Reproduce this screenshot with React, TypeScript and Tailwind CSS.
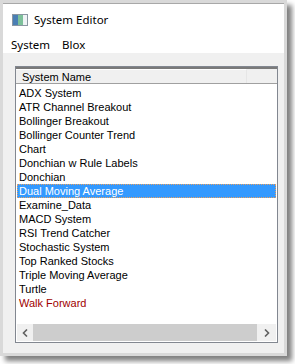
import React from "react";

const items = [
  "ADX System",
  "ATR Channel Breakout",
  "Bollinger Breakout",
  "Bollinger Counter Trend",
  "Chart",
  "Donchian w Rule Labels",
  "Donchian",
  "Dual Moving Average",
  "Examine_Data",
  "MACD System",
  "RSI Trend Catcher",
  "Stochastic System",
  "Top Ranked Stocks",
  "Triple Moving Average",
  "Turtle",
  "Walk Forward",
];

export default function App() {
  return (
    <div className="w-[295px] h-[364px] bg-white overflow-hidden">
      <div
        className="w-[287px] h-[356px] border-[3px] border-[#d9d9d9] shadow-[5px_5px_5px_rgba(0,0,0,0.5)] flex flex-col bg-white"
      >
        <div className="h-[1px] bg-[#a8a8a8]" />
        {/* title bar */}
        <div className="h-[32px] flex items-center pl-[9px] shrink-0">
          <svg width="16" height="12" viewBox="0 0 16 12" className="mr-[6px]">
            <rect x="0" y="0" width="16" height="12" fill="#8a96a2" />
            <rect x="1" y="1" width="5" height="10" fill="#4a7fb4" />
            <rect x="6" y="1" width="5" height="10" fill="#7cc09a" />
            <rect x="11" y="1" width="4" height="10" fill="#eef3f5" />
          </svg>
          <span className="text-[11.5px] text-black" style={{ fontFamily: "'Noto Sans', 'Liberation Sans', sans-serif" }}>
            System Editor
          </span>
        </div>
        {/* menu bar */}
        <div className="h-[17px] flex items-center shrink-0 text-[11.5px] text-black" style={{ fontFamily: "'Noto Sans', 'Liberation Sans', sans-serif" }}>
          <span className="ml-[8px]">System</span>
          <span className="ml-[12px]">Blox</span>
        </div>
        {/* client */}
        <div className="flex-1 bg-[#f0f0f0] pl-[12px] pr-[6px] pt-[13px] pb-[10px] flex">
          <div className="flex-1 border border-[#828790] bg-white flex flex-col leading-[14px] text-black" style={{ fontFamily: "'Liberation Sans', Arial, sans-serif", fontSize: "11px" }}>
            {/* header */}
            <div className="h-[17px] shrink-0 border-t-2 border-t-[#7a7a7a] border-b border-b-[#a0a0a0] bg-[#f0f0f0] flex">
              <div className="w-[231px] border-t border-t-white border-r border-r-[#e6e6e6] pl-[6px] flex items-center">
                System Name
              </div>
            </div>
            {/* rows */}
            <div className="flex-1 pt-[2px] pl-[1px] pr-[1px]">
              {items.map((it, i) => {
                const sel = i === 7;
                const last = it === "Walk Forward";
                return (
                  <div
                    key={it}
                    className={
                      "h-[14px] pl-[2px] whitespace-nowrap " +
                      (sel
                        ? "bg-[#3399ff] text-white outline-1 outline-dotted outline-[#e8a060] -outline-offset-1"
                        : last
                        ? "text-[#a00000]"
                        : "text-black")
                    }
                  >
                    {it}
                  </div>
                );
              })}
            </div>
            {/* horizontal scrollbar */}
            <div className="h-[17px] shrink-0 mx-[1px] mb-[1px] bg-[#f0f0f0] flex items-center">
              <div className="w-[16px] h-full flex items-center justify-center">
                <svg width="6" height="8" viewBox="0 0 6 8">
                  <path d="M5 0.5 L1.5 4 L5 7.5" stroke="#606060" strokeWidth="1.6" fill="none" />
                </svg>
              </div>
              <div className="flex-1 h-full bg-[#cdcdcd]" />
              <div className="w-[19px] h-full flex items-center justify-center">
                <svg width="6" height="8" viewBox="0 0 6 8">
                  <path d="M1 0.5 L4.5 4 L1 7.5" stroke="#606060" strokeWidth="1.6" fill="none" />
                </svg>
              </div>
            </div>
          </div>
        </div>
      </div>
    </div>
  );
}
